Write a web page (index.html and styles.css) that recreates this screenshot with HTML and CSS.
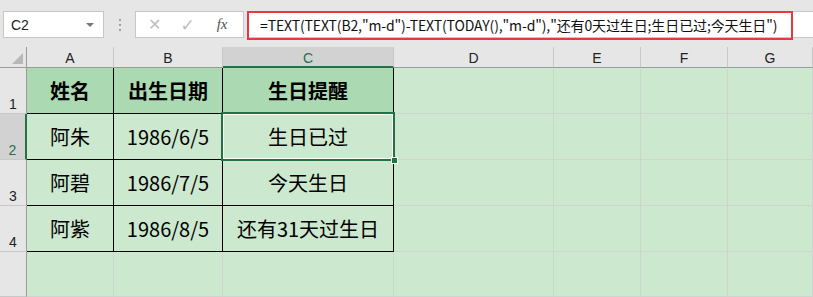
FILE: index.html
```html
<!DOCTYPE html>
<html lang="zh-CN">
<head>
   <meta charset="UTF-8"><title>生日提醒</title>
   <link rel="stylesheet" href="styles.css">
</head> <body>

<header class="bar">
   <div class="namebox">C2<span class="drop"></span></div>
   <div class="grip"><i></i><i></i><i></i></div>
   <div class="btns">
      <span class="cancel">✕</span>
      <span class="ok">✓</span>
      <span class="fx">fx</span>
   </div>
   <div class="formula">
      <div class="mark">=TEXT(TEXT(B2,"m-d")-TEXT(TODAY(),"m-d"),"还有0天过生日;生日已过;今天生日")</div>
   </div>
</header>

<main class="sheet">
   <div class="corner"></div>
   <div class="col">A</div>
   <div class="col">B</div>
   <div class="col sel">C</div>
   <div class="col">D</div>
   <div class="col">E</div>
   <div class="col">F</div>
   <div class="col">G</div>

   <div class="row">1</div>
   <div class="cell head">姓名</div>
   <div class="cell head">出生日期</div>
   <div class="cell head">生日提醒</div>
   <div class="cell"></div><div class="cell"></div><div class="cell"></div><div class="cell"></div>

   <div class="row sel">2</div>
   <div class="cell data">阿朱</div>
   <div class="cell data">1986/6/5</div>
   <div class="cell data active">生日已过</div>
   <div class="cell"></div><div class="cell"></div><div class="cell"></div><div class="cell"></div>

   <div class="row">3</div>
   <div class="cell data">阿碧</div>
   <div class="cell data">1986/7/5</div>
   <div class="cell data">今天生日</div>
   <div class="cell"></div><div class="cell"></div><div class="cell"></div><div class="cell"></div>

   <div class="row">4</div>
   <div class="cell data">阿紫</div>
   <div class="cell data">1986/8/5</div>
   <div class="cell data">还有31天过生日</div>
   <div class="cell"></div><div class="cell"></div><div class="cell"></div><div class="cell"></div>

   <div class="row"></div>
   <div class="cell"></div><div class="cell"></div><div class="cell"></div>
   <div class="cell"></div><div class="cell"></div><div class="cell"></div><div class="cell"></div>
</main>

</body> </html>
```

FILE: styles.css
```css
body {
   margin: 0;
   width: 813px;
   height: 297px;
   overflow: hidden;
   background: #e6e6e6;
   font-family: "Noto Sans CJK SC", "Noto Sans", sans-serif;
}

.bar {
   height: 47px;
   display: flex;
   align-items: flex-start;
   padding-top: 11px;
   box-sizing: border-box;
}

.namebox {
   margin-left: 3px;
   width: 101px;
   height: 27px;
   box-sizing: border-box;
   background: #fff;
   border: 1px solid #c6c6c6;
   display: flex;
   align-items: center;
   padding-left: 7px;
   font-family: "Liberation Sans", sans-serif;
   font-size: 14px;
   color: #222;
}

.drop {
   margin-left: auto;
   margin-right: 9px;
   border-left: 4px solid transparent;
   border-right: 4px solid transparent;
   border-top: 4px solid #777;
}

.grip {
   width: 31px;
   height: 27px;
   display: flex;
   flex-direction: column;
   align-items: center;
   justify-content: center;
   gap: 3px;
}

.grip i {
   width: 2px;
   height: 2px;
   background: #a0a0a0;
}

.btns {
   width: 109px;
   height: 27px;
   box-sizing: border-box;
   background: #fff;
   border: 1px solid #c6c6c6;
   display: flex;
   align-items: center;
   padding-left: 12px;
   color: #bdbdbd;
   font-size: 16px;
   font-family: "DejaVu Sans", sans-serif;
}

.btns .ok {
   margin-left: 19px;
   font-size: 17px;
}

.btns .fx {
   margin-left: 22px;
   color: #555;
   font-family: "Liberation Serif", serif;
   font-style: italic;
   font-size: 15px;
}

.formula {
   margin-left: 3px;
   flex: 1;
   height: 27px;
   box-sizing: border-box;
   background: #fff;
   border-top: 1px solid #c6c6c6;
   border-bottom: 1px solid #c6c6c6;
}

.mark {
   width: 546px;
   height: 29px;
   margin-top: -1px;
   box-sizing: border-box;
   border: 2px solid #e8383d;
   padding-left: 11px;
   font-size: 14px;
   letter-spacing: -0.12px;
   line-height: 24px;
   color: #111;
   white-space: nowrap;
}

.sheet {
   height: 250px;
   display: grid;
   grid-template-columns: 27px 87px 109px 171px 160px 87px 87px 1fr;
   grid-template-rows: 21px 46px 46px 46px 46px 1fr;
   background: #cce8cf;
}

.corner {
   background: #e6e6e6;
   border-right: 1px solid #9b9b9b;
   border-bottom: 1px solid #9b9b9b;
   position: relative;
}

.corner::after {
   content: "";
   position: absolute;
   right: 3px;
   bottom: 3px;
   border-left: 11px solid transparent;
   border-bottom: 11px solid #b8b8b8;
}

.col {
   background: #e6e6e6;
   border-right: 1px solid #c8c8c8;
   border-bottom: 1px solid #9b9b9b;
   font-family: "Liberation Sans", sans-serif;
   font-size: 14px;
   color: #222;
   display: flex;
   align-items: center;
   justify-content: center;
   padding-top: 2px;
}

.row {
   background: #e6e6e6;
   border-right: 1px solid #9b9b9b;
   border-bottom: 1px solid #c8c8c8;
   font-family: "Liberation Sans", sans-serif;
   font-size: 14px;
   color: #222;
   display: flex;
   align-items: flex-end;
   justify-content: center;
   padding-bottom: 1px;
}

.col.sel {
   background: #d2d2d2;
   color: #217346;
   border-bottom: 2px solid #217346;
}

.row.sel {
   background: #d2d2d2;
   color: #217346;
   border-right: 2px solid #217346;
}

.cell {
   border-right: 1px solid #cdd5ce;
   border-bottom: 1px solid #cdd5ce;
}

.head, .data {
   border-color: #000;
   display: flex;
   align-items: center;
   justify-content: center;
   font-size: 20px;
   color: #000;
}

.head {
   background: #aad9b2;
   font-weight: bold;
}

.active {
   position: relative;
}

.active::before {
   content: "";
   position: absolute;
   top: -2px;
   left: -2px;
   right: -2px;
   bottom: -2px;
   border: 2px solid #217346;
   box-shadow: inset 0 0 0 1px #fff;
}

.active::after {
   content: "";
   position: absolute;
   right: -5px;
   bottom: -5px;
   width: 5px;
   height: 5px;
   background: #217346;
   border: 1px solid #fff;
}
```
